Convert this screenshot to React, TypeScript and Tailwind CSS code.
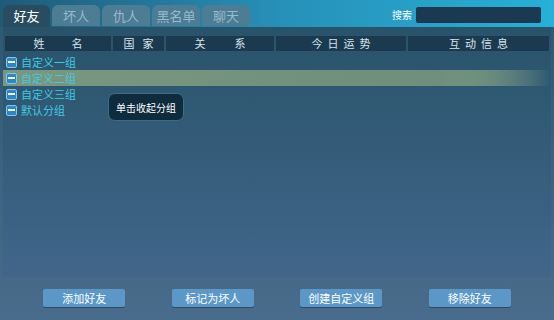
import React from "react";

const tabs = ["好友", "坏人", "仇人", "黑名单", "聊天"];

const columns = [
  { label: "姓名", w: "w-[106px]", t: "tracking-[27px] pl-[27px]" },
  { label: "国家", w: "w-[51px]", t: "tracking-[8px] pl-[8px]" },
  { label: "关系", w: "w-[108px]", t: "tracking-[29px] pl-[29px]" },
  { label: "今日运势", w: "w-[130px]", t: "tracking-[5px] pl-[5px]" },
  { label: "互动信息", w: "flex-1", t: "tracking-[5px] pl-[5px]" },
];

const groups = ["自定义一组", "自定义二组", "自定义三组", "默认分组"];

const buttons = ["添加好友", "标记为坏人", "创建自定义组", "移除好友"];

function MinusBox() {
  return (
    <span className="flex h-[11px] w-[11px] items-center justify-center rounded-[2px] border border-[#7fc8ee] bg-[#2f86c4]">
      <span className="h-[2px] w-[7px] bg-white" />
    </span>
  );
}

function GroupRow({ label }: { label: string }) {
  return (
    <div className="flex h-[16px] items-center gap-[4px] pl-[3px]">
      <MinusBox />
      <span className="text-[11px] leading-none text-[#42c9e2]">{label}</span>
    </div>
  );
}

export default function App() {
  return (
    <div
      className="flex h-[320px] w-[554px] flex-col bg-gradient-to-b from-[#2b5870] to-[#4a6c8c] text-[11px]"
      style={{ fontFamily: '"Noto Sans CJK SC", "Noto Sans", sans-serif' }}
    >
      {/* top bar with tabs */}
      <div className="flex h-[27px] items-end bg-gradient-to-r from-[#1f5a78] via-[#2790b8] to-[#27b0d8] pl-[3px]">
        <div className="flex gap-[2px]">
          {tabs.map((t, i) => (
            <div
              key={t}
              className={
                i === 0
                  ? "flex h-[22px] w-[47px] items-center justify-center rounded-t-[6px] bg-[#294c60] text-[13px] text-white"
                  : "flex h-[21px] w-[48px] items-center justify-center rounded-t-[6px] bg-[#4d7c95] text-[13px] text-[#9ab9ca]"
              }
            >
              {t}
            </div>
          ))}
        </div>
        <div className="mb-[4px] ml-auto mr-[13px] flex items-center gap-[4px]">
          <span className="text-[10px] leading-none text-white">搜索</span>
          <div className="h-[16px] w-[125px] rounded-[2px] bg-[#1b3a52]" />
        </div>
      </div>

      {/* list panel */}
      <div className="relative mx-[3px] flex h-[250px] flex-col bg-gradient-to-b from-[#28536a] to-[#41668a] pt-[9px]">
        <div className="mx-[2px] flex h-[15px] gap-[2px]">
          {columns.map((c) => (
            <div
              key={c.label}
              className={`${c.w} ${c.t} flex items-center justify-center whitespace-nowrap bg-[#1c3a4f] text-[11px] leading-none text-[#d6e4ec]`}
            >
              {c.label}
            </div>
          ))}
        </div>
        <div className="mt-[3px] flex flex-col">
          <GroupRow label={groups[0]} />
          <div className="bg-gradient-to-r from-[#a9c49d] via-[#a3bf98] via-75% to-transparent py-[1px]">
            <div className="bg-gradient-to-r from-[#7a977f] via-[#6f8f7c] via-80% to-transparent">
              <div className="-my-[1px]">
                <GroupRow label={groups[1]} />
              </div>
            </div>
          </div>
          <GroupRow label={groups[2]} />
          <GroupRow label={groups[3]} />
        </div>
        <div className="absolute left-[105px] top-[66px] flex h-[28px] w-[76px] items-center justify-center rounded-[7px] border border-[#3e6c84] bg-[#0f2b3e] text-[10px] text-white">
          单击收起分组
        </div>
      </div>

      {/* bottom buttons */}
      <div className="mt-[12px] flex h-[18px] justify-around px-[20px]">
        {buttons.map((b) => (
          <div
            key={b}
            className="flex w-[82px] items-center justify-center rounded-[2px] bg-[#5b98c8] text-[11px] text-white shadow-[0_1px_0_#2c4b66]"
          >
            {b}
          </div>
        ))}
      </div>
    </div>
  );
}
